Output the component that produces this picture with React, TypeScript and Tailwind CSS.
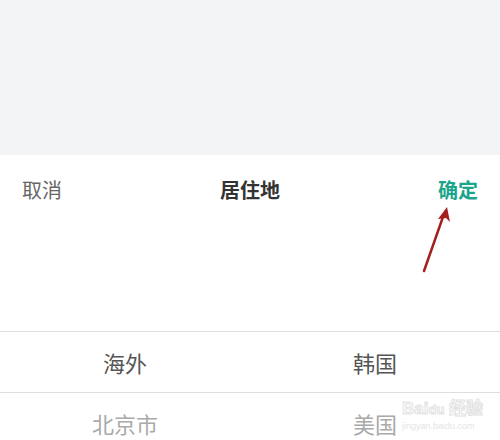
import React from "react";

const font = { fontFamily: '"Noto Sans CJK SC", "Noto Sans", sans-serif' };

export default function App() {
  return (
    <div className="relative w-[500px] h-[440px] overflow-hidden bg-white" style={font}>
      {/* dimmed page above the sheet */}
      <div className="h-[155px] bg-[#f2f4f5]" />

      {/* header */}
      <div className="flex items-center justify-between h-[70px] px-[22px] text-[20px]">
        <span className="text-[#666666]">取消</span>
        <span className="font-bold text-[#333333]">居住地</span>
        <span className="font-bold text-[#1ba58c]">确定</span>
      </div>

      <div className="h-[106px]" />

      {/* picker */}
      <div className="border-t border-[#dedede]">
        <div className="grid grid-cols-2 h-[61px] items-center text-[22px] text-[#555555] border-b border-[#dedede]">
          <span className="text-center">海外</span>
          <span className="text-center">韩国</span>
        </div>
        <div className="grid grid-cols-2 h-[61px] items-center text-[22px] text-[#aaaaaa]">
          <span className="text-center">北京市</span>
          <span className="text-center">美国</span>
        </div>
      </div>

      {/* annotation arrow */}
      <svg className="absolute left-0 top-0" width="500" height="440">
        <line x1="424" y1="271" x2="444" y2="214" stroke="#a3201c" strokeWidth="2.5" strokeLinecap="round" />
        <path d="M447 207 L438 219 L446 218 L450 222 Z" fill="#a3201c" />
      </svg>

      {/* watermark */}
      <div className="absolute left-[402px] top-[396px] text-[17px] font-bold text-transparent [-webkit-text-stroke:1px_#e2e2e2]" style={{ fontFamily: '"Liberation Sans", "Noto Sans CJK SC", sans-serif' }}>
        Bai<span className="text-[13px]">du</span> 经验
      </div>
      <div className="absolute left-[402px] top-[420px] text-[9px] text-[#e4e4e4]" style={{ fontFamily: '"Liberation Sans", sans-serif' }}>
        jingyan.baidu.com
      </div>
    </div>
  );
}
